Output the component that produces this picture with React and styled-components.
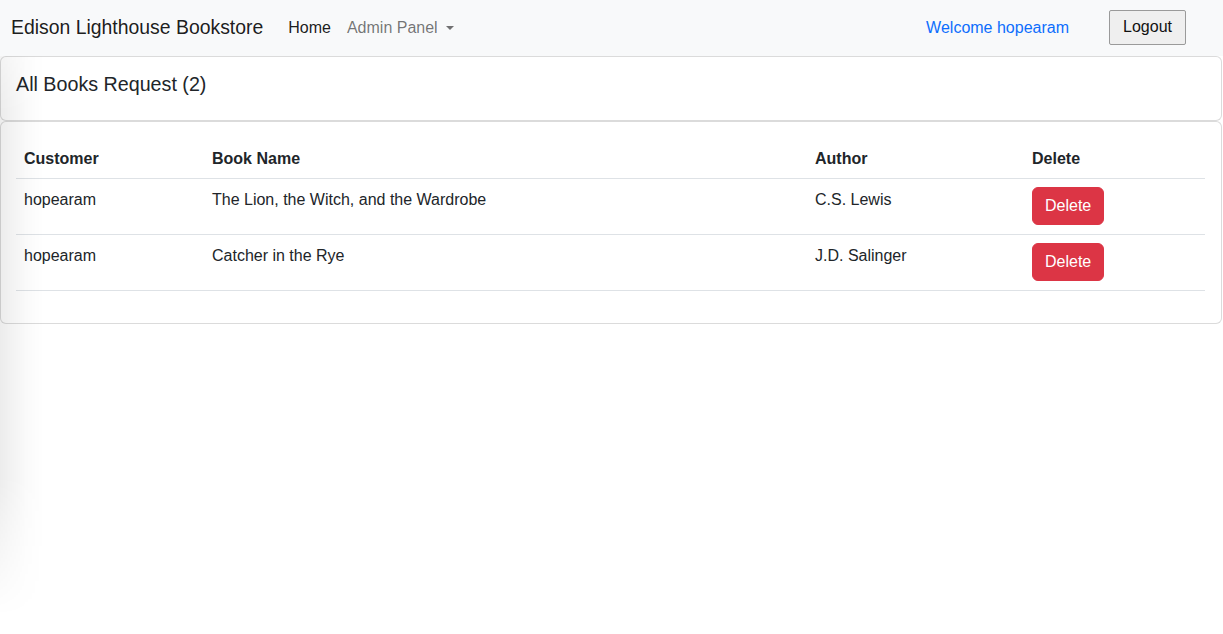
import React from "react";
import styled, { createGlobalStyle } from "styled-components";

const Global = createGlobalStyle`
  * { box-sizing: border-box; }
  body {
    margin: 0;
    background: #fff;
    color: #212529;
    font-family: "Liberation Sans", Arial, sans-serif;
    font-size: 16px;
    line-height: 1.5;
  }
`;

const Navbar = styled.nav`
  display: flex;
  align-items: center;
  height: 56px;
  padding: 0 11px;
  background: #f8f9fa;
`;

const Brand = styled.a`
  font-size: 19.4px;
  color: rgba(0, 0, 0, 0.9);
  text-decoration: none;
  margin-right: 17px;
  white-space: nowrap;
`;

const NavList = styled.ul`
  display: flex;
  list-style: none;
  margin: 0;
  padding: 0;
  flex: 1;
`;

const NavLink = styled.a`
  display: flex;
  align-items: center;
  padding: 8px 8px;
  color: ${(p) => (p.$active ? "rgba(0,0,0,0.9)" : "rgba(0,0,0,0.55)")};
  text-decoration: none;
  white-space: nowrap;
`;

const Caret = styled.span`
  display: inline-block;
  margin-left: 8px;
  border-top: 4.5px solid currentColor;
  border-left: 4px solid transparent;
  border-right: 4px solid transparent;
`;

const Welcome = styled.a`
  color: #0d6efd;
  text-decoration: none;
  margin-right: 40px;
  white-space: nowrap;
`;

const LogoutButton = styled.button`
  font-family: inherit;
  font-size: 16px;
  color: #111;
  background: #efefef;
  border: 1px solid #9a9a9a;
  border-radius: 2px;
  height: 35px;
  width: 77px;
  padding: 0;
  margin-right: 26px;
  margin-top: -2px;
`;

const Card = styled.section`
  border: 1px solid rgba(0, 0, 0, 0.14);
  border-radius: 6px;
  background: #fff;
  margin-right: 1px;
`;

const CardHeaderTitle = styled.h5`
  margin: 0;
  padding: 13px 16px 21px 15px;
  font-size: 19.7px;
  font-weight: 400;
  line-height: 29px;
  color: #212529;
`;

const CardBody = styled.div`
  padding: 16px 16px 16px 15px;
`;

const Table = styled.table`
  width: 100%;
  border-collapse: collapse;
  margin-bottom: 16px;
  table-layout: fixed;
`;

const Th = styled.th`
  text-align: left;
  font-weight: 700;
  padding: 9px 8px 7px;
  border-bottom: 1px solid #dee2e6;
  width: ${(p) => p.$w};
`;

const Td = styled.td`
  padding: 8px 8px 9px;
  vertical-align: top;
  border-bottom: 1px solid #dee2e6;
`;

const CellText = styled.span`
  display: block;
  padding-top: 1px;
`;

const DeleteButton = styled.button`
  font-family: inherit;
  font-size: 16px;
  line-height: 24px;
  color: #fff;
  background: #dc3545;
  border: 1px solid #dc3545;
  border-radius: 6px;
  padding: 6px 12px;
  cursor: pointer;
`;

const EdgeShade = styled.div`
  position: fixed;
  left: 0;
  top: 56px;
  width: 44px;
  height: 560px;
  pointer-events: none;
  background: linear-gradient(to right, rgba(0,0,0,0.075), rgba(0,0,0,0.02) 60%, rgba(0,0,0,0));
  -webkit-mask-image: linear-gradient(to bottom, rgba(0,0,0,0.6), #000 10%, #000 75%, rgba(0,0,0,0));
  mask-image: linear-gradient(to bottom, rgba(0,0,0,0.6), #000 10%, #000 75%, rgba(0,0,0,0));
`;

const rows = [
  { customer: "hopearam", book: "The Lion, the Witch, and the Wardrobe", author: "C.S. Lewis" },
  { customer: "hopearam", book: "Catcher in the Rye", author: "J.D. Salinger" },
];

export default function App() {
  return (
    <>
      <Global />
      <Navbar>
        <Brand href="#">Edison Lighthouse Bookstore</Brand>
        <NavList>
          <li><NavLink $active href="#">Home</NavLink></li>
          <li><NavLink href="#">Admin Panel<Caret /></NavLink></li>
        </NavList>
        <Welcome href="#">Welcome hopearam</Welcome>
        <LogoutButton>Logout</LogoutButton>
      </Navbar>
      <Card>
        <CardHeaderTitle>All Books Request (2)</CardHeaderTitle>
      </Card>
      <Card>
        <CardBody>
          <Table>
            <thead>
              <tr>
                <Th $w="188px">Customer</Th>
                <Th $w="603px">Book Name</Th>
                <Th $w="217px">Author</Th>
                <Th>Delete</Th>
              </tr>
            </thead>
            <tbody>
              {rows.map((r, i) => (
                <tr key={i}>
                  <Td><CellText>{r.customer}</CellText></Td>
                  <Td><CellText>{r.book}</CellText></Td>
                  <Td><CellText>{r.author}</CellText></Td>
                  <Td><DeleteButton>Delete</DeleteButton></Td>
                </tr>
              ))}
            </tbody>
          </Table>
        </CardBody>
      </Card>
      <EdgeShade />
    </>
  );
}
